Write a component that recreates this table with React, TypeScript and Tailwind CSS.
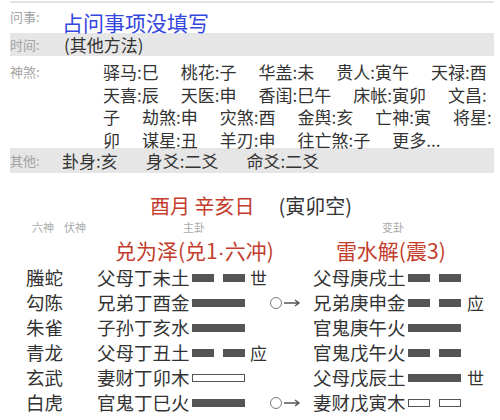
type Yao = 'yin' | 'yang' | 'yangO' | 'yinO'

const shensha: string[][] = [
  ['驿马:巳', '桃花:子', '华盖:未', '贵人:寅午', '天禄:酉'],
  ['天喜:辰', '天医:申', '香闺:巳午', '床帐:寅卯', '文昌:'],
  ['子', '劫煞:申', '灾煞:酉', '金舆:亥', '亡神:寅', '将星:'],
  ['卯', '谋星:丑', '羊刃:申', '往亡煞:子', '更多...'],
]

const rows: {
  god: string
  main: string
  mainYao: Yao
  mainMark?: string
  moving?: boolean
  change: string
  changeYao: Yao
  changeMark?: string
}[] = [
  { god: '螣蛇', main: '父母丁未土', mainYao: 'yin', mainMark: '世', change: '父母庚戌土', changeYao: 'yin' },
  { god: '勾陈', main: '兄弟丁酉金', mainYao: 'yang', moving: true, change: '兄弟庚申金', changeYao: 'yin', changeMark: '应' },
  { god: '朱雀', main: '子孙丁亥水', mainYao: 'yang', change: '官鬼庚午火', changeYao: 'yang' },
  { god: '青龙', main: '父母丁丑土', mainYao: 'yin', mainMark: '应', change: '官鬼戊午火', changeYao: 'yin' },
  { god: '玄武', main: '妻财丁卯木', mainYao: 'yangO', change: '父母戊辰土', changeYao: 'yang', changeMark: '世' },
  { god: '白虎', main: '官鬼丁巳火', mainYao: 'yang', moving: true, change: '妻财戊寅木', changeYao: 'yinO' },
]

function Bar({ yao }: { yao: Yao }) {
  if (yao === 'yang') return <div className="h-[8px] w-[53px] bg-[#555]" />
  if (yao === 'yangO') return <div className="h-[8px] w-[53px] border-[1.5px] border-[#555] bg-white" />
  const seg = yao === 'yin' ? 'bg-[#555]' : 'border-[1.5px] border-[#555] bg-white'
  return (
    <div className="flex w-[53px] justify-between">
      <div className={`h-[8px] w-[22px] ${seg}`} />
      <div className={`h-[8px] w-[22px] ${seg}`} />
    </div>
  )
}

function MoveMark() {
  return (
    <div className="flex items-center">
      <span className="ml-[1px] h-[12px] w-[12px] rounded-full border-[1.5px] border-[#777]" />
      <svg width="18" height="10" viewBox="0 0 18 10" className="ml-[1px]">
        <path d="M1 5H16M12 2L16 5L12 8" fill="none" stroke="#555" strokeWidth="1.4" />
      </svg>
    </div>
  )
}

export default function App() {
  return (
    <div className="h-[420px] w-[500px] overflow-hidden bg-white font-['Noto_Sans_CJK_SC',sans-serif] text-[#333]">
      <div className="ml-[10px] mr-[6px] mt-px border-t-2 border-[#e3e3e3]">
        <div className="flex h-[30px]">
          <div className="w-[52px] pt-[6px] text-[13px] leading-[16px] text-[#a3a3a3]">问事:</div>
          <div className="mt-[8px] text-[21px] leading-[22px] text-[#3346e0]">占问事项没填写</div>
        </div>
        <div className="flex h-[23px] bg-[#e6e6e6] pt-px">
          <div className="w-[52px] text-[13px] leading-[22px] text-[#a3a3a3]">时间:</div>
          <div className="ml-[2px] text-[17px] leading-[22px]">(其他方法)</div>
        </div>
        <div className="flex h-[92px]">
          <div className="w-[52px] pt-[8px] text-[13px] leading-[16px] text-[#a3a3a3]">神煞:</div>
          <div className="flex flex-col gap-[6.7px] pl-[41px] pt-[8px] text-[17px] leading-[16px] whitespace-nowrap">
            {shensha.map((line, i) => (
              <div key={i} className="flex gap-[22px]">
                {line.map((s, j) => (
                  <span key={j}>{s}</span>
                ))}
              </div>
            ))}
          </div>
        </div>
        <div className="flex h-[25px] bg-[#e6e6e6]">
          <div className="w-[52px] text-[13px] leading-[25px] text-[#a3a3a3]">其他:</div>
          <div className="flex gap-[28px] text-[17px] leading-[25px]">
            <span>卦身:亥</span>
            <span>身爻:二爻</span>
            <span>命爻:二爻</span>
          </div>
        </div>
      </div>

      <div className="mt-[19px] flex pl-[150px] text-[20px] leading-[28px]">
        <span className="text-[#c43c2c]">酉月 辛亥日</span>
        <span className="ml-[24px]">(寅卯空)</span>
      </div>

      <div className="flex h-[14px] text-[11px] leading-[14px] text-[#aaa]">
        <span className="ml-[32px]">六神</span>
        <span className="ml-[10px]">伏神</span>
        <span className="ml-[97px]">主卦</span>
        <span className="ml-[177px]">变卦</span>
      </div>

      <div className="mt-[4px] flex text-[21px] leading-[24px] text-[#c43c2c]">
        <span className="ml-[115px]">
          兑为泽(兑1<span className="font-['Liberation_Sans',sans-serif]">·</span>六冲)
        </span>
        <span className="ml-[62px]">雷水解(震3)</span>
      </div>

      <div className="mt-px">
        {rows.map((r) => (
          <div key={r.god} className="flex h-[25px] items-center text-[18.5px]">
            <div className="ml-[26px] w-[71px]">{r.god}</div>
            <div className="w-[95px] whitespace-nowrap">{r.main}</div>
            <Bar yao={r.mainYao} />
            <div className="w-[24px] pl-[5px] text-[17px]">{r.mainMark}</div>
            <div className="w-[44px]">{r.moving && <MoveMark />}</div>
            <div className="w-[95px] whitespace-nowrap">{r.change}</div>
            <Bar yao={r.changeYao} />
            <div className="pl-[6px] text-[17px]">{r.changeMark}</div>
          </div>
        ))}
      </div>
    </div>
  )
}
